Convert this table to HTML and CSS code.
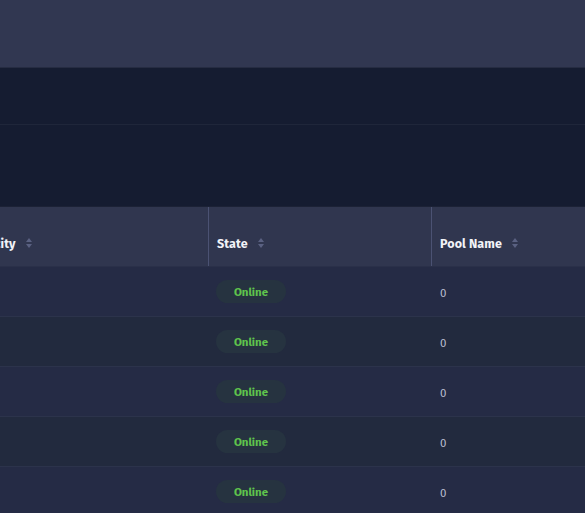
FILE: index.html
```html
<!DOCTYPE html>
<html>
<head>
<meta charset="utf-8">
<link rel="stylesheet" href="styles.css">
</head>
<body>
<div class="topbar"></div>
<div class="band band-a"></div>
<div class="band band-b"></div>
<div class="table-wrap">
  <div class="table">
    <div class="row head">
      <div class="cell c1">Capacity <span class="sort"><svg width="6" height="10" viewBox="0 0 6 10"><path d="M3 0L6 4H0Z M3 10L0 6H6Z" fill="#5a6182"/></svg></span></div>
      <div class="cell c2">State <span class="sort"><svg width="6" height="10" viewBox="0 0 6 10"><path d="M3 0L6 4H0Z M3 10L0 6H6Z" fill="#5a6182"/></svg></span></div>
      <div class="cell c3">Pool Name <span class="sort"><svg width="6" height="10" viewBox="0 0 6 10"><path d="M3 0L6 4H0Z M3 10L0 6H6Z" fill="#5a6182"/></svg></span></div>
    </div>
    <div class="row body odd"><div class="cell c1"></div><div class="cell c2"><span class="badge">Online</span></div><div class="cell c3">0</div></div>
    <div class="row body even"><div class="cell c1"></div><div class="cell c2"><span class="badge">Online</span></div><div class="cell c3">0</div></div>
    <div class="row body odd"><div class="cell c1"></div><div class="cell c2"><span class="badge">Online</span></div><div class="cell c3">0</div></div>
    <div class="row body even"><div class="cell c1"></div><div class="cell c2"><span class="badge">Online</span></div><div class="cell c3">0</div></div>
    <div class="row body odd"><div class="cell c1"></div><div class="cell c2"><span class="badge">Online</span></div><div class="cell c3">0</div></div>
  </div>
</div>
</body>
</html>
```
FILE: styles.css
```css
html, body {
  margin: 0;
  padding: 0;
  background: #151c31;
  font-family: "Fira Sans", "Noto Sans", "Open Sans", sans-serif;
  overflow: hidden;
}
.topbar {
  height: 67px;
  background: #313751;
  border-bottom: 1px solid #262c42;
}
.band {
  background: #151c31;
}
.band-a {
  height: 56px;
  border-bottom: 1px solid #1f263a;
}
.band-b {
  height: 81px;
  border-bottom: 1px solid #1c2236;
}
.table-wrap {
  overflow: hidden;
}
.table {
  margin-left: -42px;
  width: 700px;
}
.row {
  display: grid;
  grid-template-columns: 250px 223px 227px;
}
.head {
  height: 59px;
  background: #30364f;
  border-bottom: 1px solid #2a3049;
  color: #f2f3f8;
  font-size: 12.5px;
  font-weight: 700;
  letter-spacing: 0.1px;
}
.head .cell {
  display: flex;
  align-items: center;
  padding-left: 8px;
  padding-top: 13px;
}
.head .c2, .head .c3 {
  border-left: 1px solid #4b5273;
}
.sort {
  display: inline-flex;
  margin-left: 10px;
  margin-top: -1px;
}
.body {
  height: 49px;
  border-bottom: 1px solid #2c334b;
  color: #b9bed0;
  font-size: 11.5px;
}
.odd { background: #252b45; }
.even { background: #222a3e; }
.body .cell {
  display: flex;
  align-items: center;
  padding-left: 9px;
  padding-top: 2px;
}
.body .c2 { padding-left: 8px; }
.body .c3 { padding-left: 9px; }
.badge {
  display: inline-flex;
  align-items: center;
  justify-content: center;
  width: 70px;
  height: 23px;
  margin-top: -2px;
  border-radius: 12px;
  background: #263340;
  color: #5fc44c;
  font-size: 11.5px;
  font-weight: 700;
}
```
